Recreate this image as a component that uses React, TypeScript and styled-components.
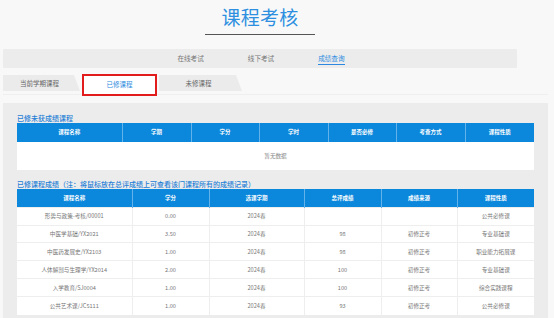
import React from "react";
import styled, { createGlobalStyle } from "styled-components";

const GlobalStyle = createGlobalStyle`
  html, body { margin: 0; padding: 0; background: #f8f8f8; }
  body { font-family: "Noto Sans CJK SC", "Noto Sans", sans-serif; }
  * { box-sizing: border-box; }
`;

const Page = styled.div`
  width: 554px;
  height: 318px;
  overflow: hidden;
  background: #f8f8f8;
`;

const Header = styled.div`
  width: 514px;
  margin-left: 3px;
  display: flex;
  flex-direction: column;
  align-items: center;
`;

const Title = styled.h1`
  margin: 0;
  padding-top: 5px;
  width: 110px;
  height: 35px;
  text-align: center;
  font-size: 19px;
  line-height: 23px;
  font-weight: 400;
  color: #2d8fe0;
  letter-spacing: 0.3px;
  border-bottom: 1px solid #555;
`;

const Nav = styled.div`
  margin-top: 14px;
  width: 514px;
  height: 19px;
  background: #ececec;
  border-radius: 1px;
  display: flex;
  justify-content: center;
  align-items: stretch;
  gap: 44px;
  padding-left: 2px;
`;

const NavItem = styled.div<{ $active?: boolean }>`
  font-size: 6.6px;
  line-height: 19px;
  color: ${(p) => (p.$active ? "#2b8ae0" : "#777")};
  position: relative;
  &::after {
    content: "";
    display: ${(p) => (p.$active ? "block" : "none")};
    position: absolute;
    left: 0;
    right: 0;
    bottom: 3px;
    height: 1px;
    background: #2b8ae0;
  }
`;

const SubTabs = styled.div`
  margin-top: 5px;
  margin-left: 3px;
  width: 545px;
  height: 22px;
  display: flex;
  align-items: flex-end;
  gap: 2px;
  border-bottom: 1px solid #efefef;
  position: relative;
`;

const SubTab = styled.div<{ $w: number }>`
  width: ${(p) => p.$w}px;
  height: 16px;
  margin-bottom: 3px;
  background: #ebebeb;
  clip-path: polygon(0 0, calc(100% - 6px) 0, 100% 100%, 0 100%);
  font-size: 6.5px;
  line-height: 16px;
  color: #666;
  text-align: center;
  padding-right: 4px;
`;

const ActiveTab = styled.div`
  width: 75px;
  height: 22px;
  margin-bottom: -2px;
  background: #fff;
  font-size: 6.5px;
  line-height: 21px;
  color: #2b8ae0;
  text-align: center;
  position: relative;
  &::after {
    content: "";
    position: absolute;
    inset: 0;
    border: 2px solid #e21c1c;
  }
`;

const Panel = styled.div`
  margin-top: 8px;
  margin-left: 3px;
  width: 545px;
  height: 230px;
  background: #ececec;
  padding: 11px 14px 0 14px;
`;

const SectionTitle = styled.div<{ $gap?: number }>`
  margin-top: ${(p) => p.$gap ?? 0}px;
  font-size: 7px;
  line-height: 8px;
  color: #1f7fd6;
  font-weight: 500;
`;

const Table = styled.table`
  width: 517px;
  border-collapse: collapse;
  table-layout: fixed;
  margin-top: 1px;
  background: #fff;
`;

const Th = styled.th<{ $w: number }>`
  width: ${(p) => p.$w}px;
  height: 18.6px;
  padding: 0;
  background: #0b87db;
  color: #fff;
  font-size: 5.5px;
  line-height: 8px;
  font-weight: 700;
  text-align: center;
  border-left: 1px solid #64b2ea;
  &:first-child { border-left: none; }
`;

const Td = styled.td`
  height: 17.9px;
  padding: 0;
  font-size: 5.6px;
  line-height: 8px;
  color: #777;
  text-align: center;
  border-left: 1px solid #eeeeee;
  border-top: 1px solid #eeeeee;
  &:first-child { border-left: none; }
`;

const EmptyCell = styled.td`
  height: 28px;
  padding: 0;
  font-size: 5.6px;
  line-height: 8px;
  color: #888;
  text-align: center;
`;

const cols1: [string, number][] = [
  ["课程名称", 105],
  ["学期", 69],
  ["学分", 68],
  ["学时", 69],
  ["是否必修", 68],
  ["考查方式", 69],
  ["课程性质", 69],
];

const cols2: [string, number][] = [
  ["课程名称", 115],
  ["学分", 77],
  ["选课学期", 95],
  ["总评成绩", 77],
  ["成绩来源", 76],
  ["课程性质", 77],
];

const rows: string[][] = [
  ["形势与政策-考核/00001", "0.00", "2024春", "", "", "公共必修课"],
  ["中医学基础/YX2021", "3.50", "2024春", "98", "初修正考", "专业基础课"],
  ["中医药发展史/YX2103", "1.00", "2024春", "98", "初修正考", "职业能力拓展课"],
  ["人体解剖与生理学/YX2014", "2.00", "2024春", "100", "初修正考", "专业基础课"],
  ["入学教育/SJ0004", "1.00", "2024春", "100", "初修正考", "综合实践课程"],
  ["公共艺术课/JC5111", "1.00", "2024春", "93", "初修正考", "公共必修课"],
];

export default function App() {
  return (
    <Page>
      <GlobalStyle />
      <Header>
        <Title>课程考核</Title>
        <Nav>
          <NavItem>在线考试</NavItem>
          <NavItem>线下考试</NavItem>
          <NavItem $active>成绩查询</NavItem>
        </Nav>
      </Header>
      <SubTabs>
        <SubTab $w={77}>当前学期课程</SubTab>
        <ActiveTab>已修课程</ActiveTab>
        <SubTab $w={83}>未修课程</SubTab>
      </SubTabs>
      <Panel>
        <SectionTitle>已修未获成绩课程</SectionTitle>
        <Table>
          <thead>
            <tr>
              {cols1.map(([n, w]) => (
                <Th key={n} $w={w}>{n}</Th>
              ))}
            </tr>
          </thead>
          <tbody>
            <tr>
              <EmptyCell colSpan={7}>暂无数据</EmptyCell>
            </tr>
          </tbody>
        </Table>
        <SectionTitle $gap={10}>已修课程成绩（注：将鼠标放在总评成绩上可查看该门课程所有的成绩记录）</SectionTitle>
        <Table>
          <thead>
            <tr>
              {cols2.map(([n, w]) => (
                <Th key={n} $w={w}>{n}</Th>
              ))}
            </tr>
          </thead>
          <tbody>
            {rows.map((r, i) => (
              <tr key={i}>
                {r.map((c, j) => (
                  <Td key={j}>{c}</Td>
                ))}
              </tr>
            ))}
          </tbody>
        </Table>
      </Panel>
    </Page>
  );
}
